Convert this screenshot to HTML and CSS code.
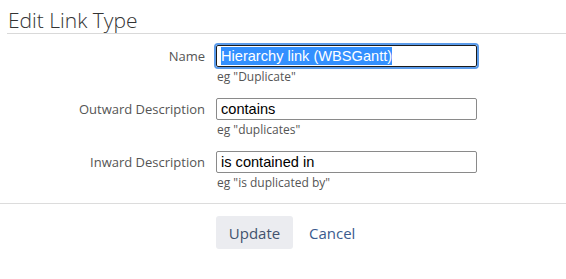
FILE: index.html
```html
<!DOCTYPE html>
<html>

<head>
    <meta charset="utf-8" />
    <title>Edit Link Type</title>
    <link rel="stylesheet" href="styles.css">
</head>

<body>
    <div class="dialog">
        <h2 class="dialog-title">Edit Link Type</h2>
        <form class="link-form">
            <label class="field-label" for="linkName">Name</label>
            <div class="field">
                <div class="text-input is-focused" id="linkName"><span class="selected">Hierarchy link (WBSGantt)</span></div>
                <div class="hint">eg "Duplicate"</div>
            </div>

            <label class="field-label" for="outward">Outward Description</label>
            <div class="field">
                <input class="text-input" id="outward" type="text" value="contains" />
                <div class="hint">eg "duplicates"</div>
            </div>

            <label class="field-label" for="inward">Inward Description</label>
            <div class="field">
                <input class="text-input" id="inward" type="text" value="is contained in" />
                <div class="hint">eg "is duplicated by"</div>
            </div>
        </form>
        <div class="buttons">
            <button type="button" class="btn">Update</button>
            <a class="cancel" href="#">Cancel</a>
        </div>
    </div>
</body>

</html>
```

FILE: styles.css
```css
body {
    margin: 0;
    background: #fff;
    font-family: "Open Sans", "Liberation Sans", sans-serif;
    color: #333;
}

.dialog-title {
    margin: 0 0 0 7px;
    padding: 8px 0 1px 1px;
    font-size: 21px;
    font-weight: 300;
    line-height: 24px;
    color: #333;
    border-bottom: 1px solid #d9d9d9;
}

.link-form {
    display: grid;
    grid-template-columns: 205px 261px;
    column-gap: 11px;
    row-gap: 13px;
    padding-top: 11px;
    padding-bottom: 12px;
}

.field-label {
    text-align: right;
    font-size: 13px;
    line-height: 22px;
    color: #555;
}

.text-input {
    box-sizing: border-box;
    display: block;
    width: 261px;
    height: 22px;
    margin: 0;
    padding: 0 4px;
    border: 1px solid #8a8a8a;
    border-radius: 2px;
    font-family: "Liberation Sans", Arial, sans-serif;
    font-size: 14.6px;
    line-height: 20px;
    color: #000;
    background: #fff;
}

.text-input.is-focused {
    border-color: #1b1b1b;
    outline: 2px solid #5b9bea;
    white-space: nowrap;
}

.selected {
    background: #3390ff;
    color: #fff;
    padding: 1px 0;
}

.hint {
    margin-top: 2px;
    padding-left: 1px;
    font-size: 12px;
    line-height: 16px;
    color: #555;
}

.buttons {
    display: flex;
    align-items: center;
    gap: 16px;
    padding: 12px 0 0 216px;
    border-top: 1px solid #dcdcdc;
}

.btn {
    width: 77px;
    height: 33px;
    border: 0;
    border-radius: 3px;
    background: #ebecf0;
    font-family: "Open Sans", "Liberation Sans", sans-serif;
    font-size: 15px;
    color: #42526e;
}

.cancel {
    font-size: 15px;
    color: #3b5b8e;
    text-decoration: none;
}
```
